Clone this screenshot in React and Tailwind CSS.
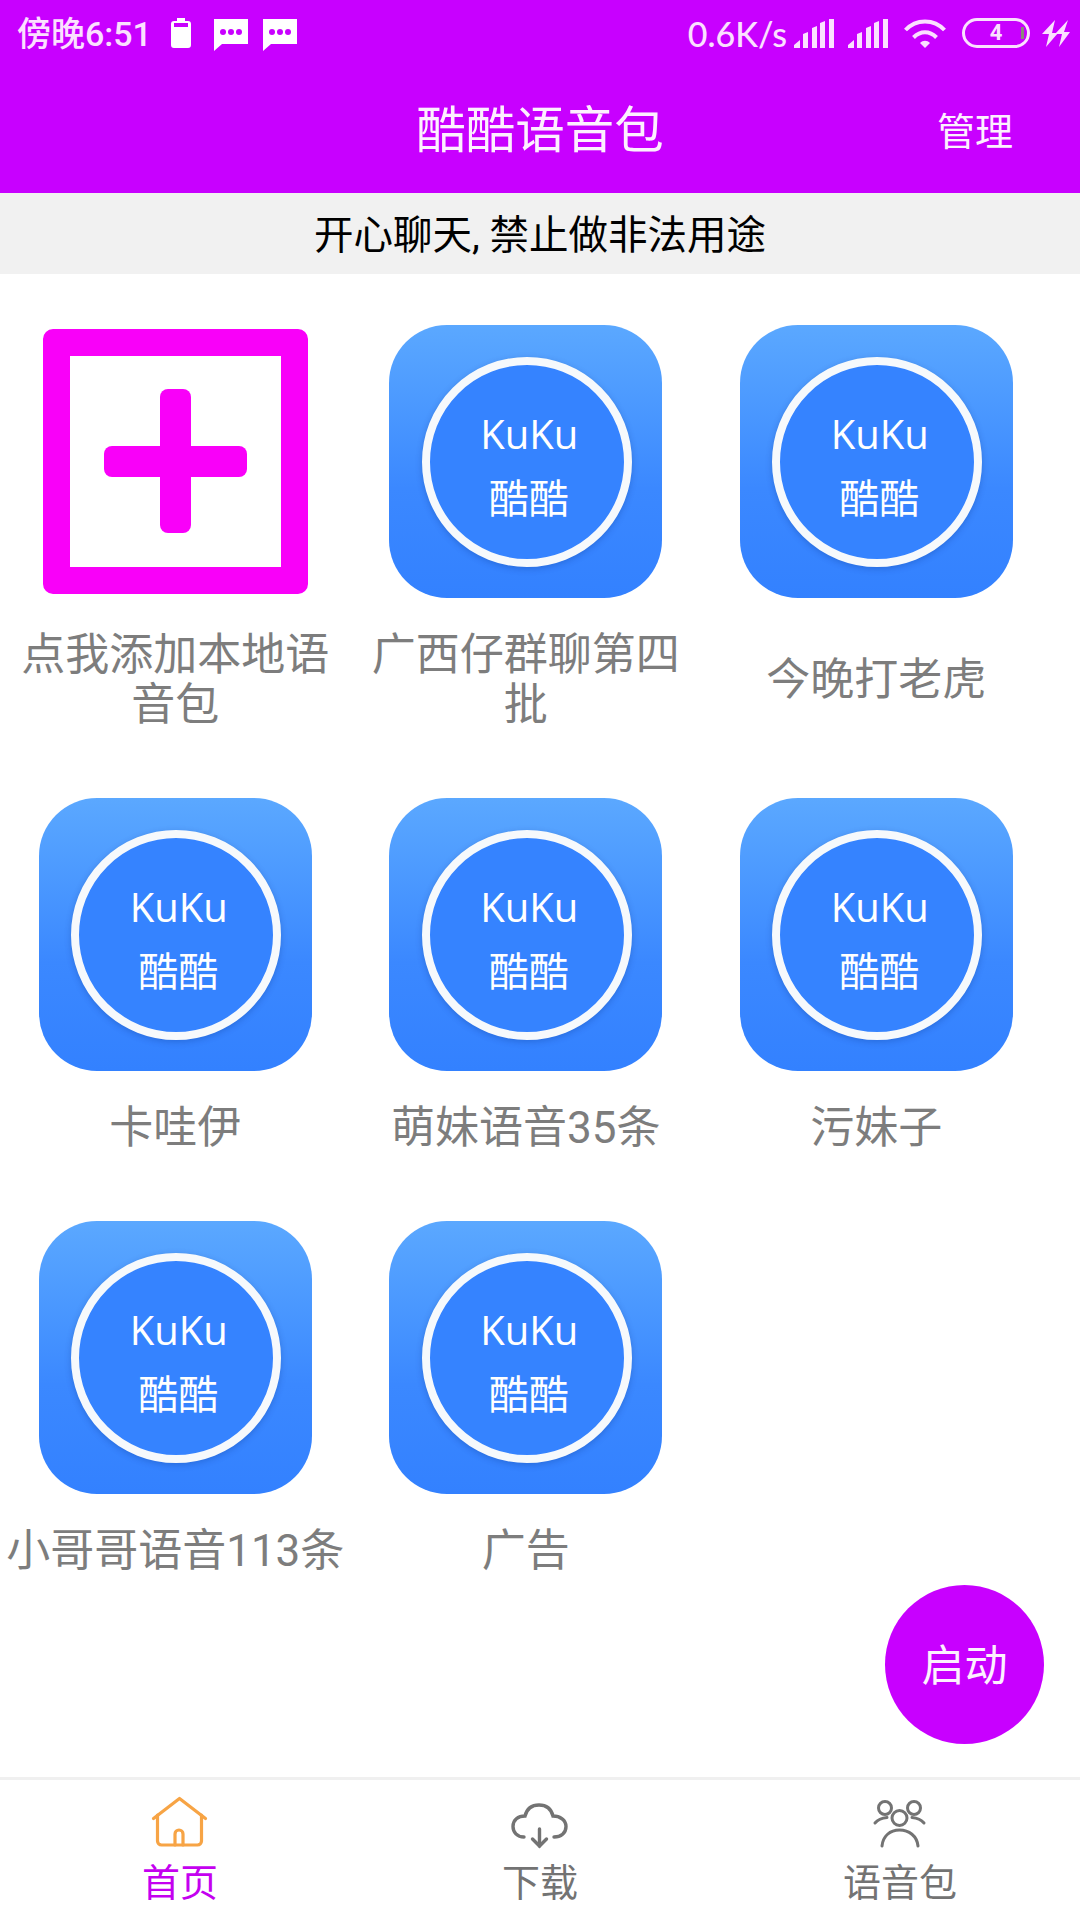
const packs = [
  '广西仔群聊第四批',
  '今晚打老虎',
  '卡哇伊',
  '萌妹语音35条',
  '污妹子',
  '小哥哥语音113条',
  '广告',
]

function KukuIcon() {
  return (
    <div className="w-[273px] h-[273px] rounded-[58px] bg-gradient-to-b from-[#5ba8ff] via-[#3b88ff] via-60% to-[#3381ff] flex items-center justify-center">
      <div className="ml-[2px] w-[210px] h-[210px] rounded-full border-[8px] border-[#f6f9fc] bg-[#3583ff] shadow-[0_2px_6px_rgba(0,40,120,0.25)] flex flex-col items-center text-white">
        <span className="mt-[41px] ml-[5px] h-[56px] leading-[56px] text-[40px] font-['Open_Sans',sans-serif]">KuKu</span>
        <span className="mt-[15px] ml-[4px] h-[46px] leading-[46px] text-[40px]">酷酷</span>
      </div>
    </div>
  )
}

function AddIcon() {
  return (
    <div className="w-[273px] h-[273px] flex items-center justify-center">
      <div className="relative w-[265px] h-[265px] rounded-[10px] border-[27px] border-[#f900f9] bg-white">
        <div className="absolute left-[90px] top-[33px] w-[31px] h-[144px] rounded-[8px] bg-[#f900f9]" />
        <div className="absolute left-[34px] top-[90px] w-[143px] h-[31px] rounded-[8px] bg-[#f900f9]" />
      </div>
    </div>
  )
}

function GridItem({ label, add }) {
  return (
    <div className="flex flex-col items-center mb-[68px]">
      {add ? <AddIcon /> : <KukuIcon />}
      <div className="mt-[32px] flex-1 flex items-center">
        <p className="text-center text-[44px] leading-[50px] text-[#7d7d7d]">{label}</p>
      </div>
    </div>
  )
}

function Signal({ className }) {
  return (
    <svg className={className} width="40" height="29" viewBox="0 0 40 29" fill="#fbe0ff">
      <path d="M0 29v-3l6-5v8zM9 29V15l5-2v16zM18 29V9l5-2v22zM26 29V4l5-2v27zM35 29V0h5v29z" />
    </svg>
  )
}

function Bubble({ className }) {
  return (
    <svg className={className} width="34" height="32" viewBox="0 0 34 32">
      <path d="M0 0h34v25H8l-8 7z" fill="#fff" />
      <circle cx="9" cy="13" r="3" fill="#c800ff" /><circle cx="17" cy="13" r="3" fill="#c800ff" /><circle cx="25" cy="13" r="3" fill="#c800ff" />
    </svg>
  )
}

function StatusBar() {
  return (
    <div className="h-[66px] flex items-center text-[#fbe0ff]">
      <span className="ml-[17px] mt-[2px] text-[34px] leading-[40px] font-medium">傍晚6:51</span>
      <svg className="ml-[19px]" width="20" height="30" viewBox="0 0 20 30">
        <path d="M6 0h8v3h3a3 3 0 0 1 3 3v21a3 3 0 0 1-3 3H3a3 3 0 0 1-3-3V6a3 3 0 0 1 3-3h3z" fill="#fff" />
        <rect x="3" y="5" width="14" height="4" fill="#c800ff" />
      </svg>
      <Bubble className="ml-[23px] mt-[3px]" />
      <Bubble className="ml-[15px] mt-[3px]" />

      <span className="ml-auto mt-[2px] text-[34px] leading-[40px] font-medium font-['Lato',sans-serif]">0.6K/s</span>
      <Signal className="ml-[7px]" />
      <Signal className="ml-[14px]" />
      <svg className="ml-[16px] mt-[1px]" width="42" height="30" viewBox="0 0 42 30" fill="none" stroke="#fbe0ff" strokeWidth="4">
        <path d="M1.5 11C12 -0.5 30 -0.5 40.5 11" />
        <path d="M9.5 18.5c7-7 16-7 23 0" />
        <path d="M16 24c3-3 7-3 10 0l-5 5z" fill="#fbe0ff" stroke="none" />
      </svg>
      <div className="relative ml-[16px] w-[68px] h-[30px] rounded-full border-[3px] border-[#fbe0ff] flex items-center justify-center">
        <span className="text-[22px] leading-[24px] font-bold font-['Roboto',sans-serif]">4</span>
        <div className="absolute right-[3px] top-[6px] w-[3px] h-[12px] bg-[#8a8a7a]" />
      </div>
      <svg className="ml-[11px] mr-[10px]" width="29" height="29" viewBox="0 0 29 29" fill="#fbe0ff">
        <path d="M14 1 1 15h7L5 28l12-14h-6zM27 1 14 15h7l-3 13L29 13h-6z" />
      </svg>
    </div>
  )
}

function TabItem({ icon, label, active }) {
  return (
    <div className="flex flex-col items-center">
      <div className="h-[70px] mt-[10px]">{icon}</div>
      <span className={`mt-[3px] text-[38px] leading-[40px] ${active ? 'text-[#c400f0]' : 'text-[#737373]'}`}>{label}</span>
    </div>
  )
}

export default function App() {
  return (
    <div className="relative w-[1080px] h-[1920px] flex flex-col bg-white overflow-hidden font-['Roboto','Noto_Sans_CJK_SC',sans-serif]">
      <div className="h-[193px] bg-[#c800ff]">
        <StatusBar />
        <div className="relative h-[127px] pt-[3px] flex items-center justify-center text-white">
          <span className="text-[49.5px] leading-[58px] text-[#fdf0ff]">酷酷语音包</span>
          <span className="absolute right-[67px] top-[43px] text-[38px] leading-[46px] text-[#fdf0ff]">管理</span>
        </div>
      </div>

      <div className="h-[81px] pt-[5px] bg-[#f1f1f1] flex items-center justify-center text-[39.5px] text-black">
        开心聊天, 禁止做非法用途
      </div>

      <div className="flex-1 pt-[51px] grid grid-cols-[repeat(3,350.5px)] content-start">
        <GridItem add label="点我添加本地语音包" />
        {packs.map(p => <GridItem key={p} label={p} />)}
      </div>

      <div className="h-[143px] border-t-[3px] border-[#f0f0f0] grid grid-cols-3">
        <TabItem
          active
          label="首页"
          icon={
            <svg width="80" height="70" viewBox="0 0 80 70" fill="none" stroke="#f7a445" strokeWidth="3.2" strokeLinejoin="round" strokeLinecap="round">
              <path d="M13.5 28.5 39.5 8.5l26 20" />
              <path d="M17.5 25v26a4 4 0 0 0 4 4h36a4 4 0 0 0 4-4V25" />
              <path d="M35 55V44a4 4 0 0 1 8 0v11" />
            </svg>
          }
        />
        <TabItem
          label="下载"
          icon={
            <svg width="120" height="70" viewBox="0 0 120 70" fill="none" stroke="#737373" strokeWidth="3.4" strokeLinecap="round">
              <path d="M44 47C37 47 33 42 33 36.5 33 30 38 26 45 26 47 18 52 15 59 15s12 3 14 11c7 0 13 4 13 10.5S81 47 74 47" />
              <path d="M59.500 39v17" />
              <path d="M52.500 49l7 7 7-7" />
            </svg>
          }
        />
        <TabItem
          label="语音包"
          icon={
            <svg width="80" height="70" viewBox="0 0 80 70" fill="none" stroke="#737373" strokeWidth="3" strokeLinecap="round">
              <circle cx="25" cy="18" r="6.500" />
              <circle cx="54" cy="18" r="6.500" />
              <circle cx="39.500" cy="28" r="7.500" />
              <path d="M22 56c1-10 8-16 17.500-16S57 46 58 56" />
              <path d="M15 33c3-3.500 7-5 12-5.500" />
              <path d="M64 33c-3-3.500-7-5-12-5.500" />
            </svg>
          }
        />
      </div>

      <div className="absolute left-[885px] top-[1585px] w-[159px] h-[159px] pt-[4px] rounded-full bg-[#c800ff] flex items-center justify-center text-[43px] text-[#fdf0ff]">
        启动
      </div>
    </div>
  )
}
